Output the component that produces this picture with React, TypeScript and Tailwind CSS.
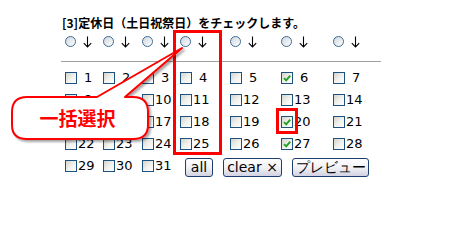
import React from "react";

const checked = [6, 20, 27];
const cols = "grid grid-cols-[38px_39px_38px_50px_51px_52px_52px]";

function Box({ on }: { on?: boolean }) {
  return (
    <span className="relative inline-block w-[12px] h-[12px] shrink-0 border border-[#1c5180] bg-linear-to-br from-[#d4d4cc] via-[#f0f0ec] to-white">
      {on && (
        <svg viewBox="0 0 10 10" className="absolute left-0 top-0 w-[10px] h-[10px]">
          <path d="M2 5.2 L4.2 7.4 L8.2 2.6" fill="none" stroke="#21a121" strokeWidth="1.9" />
        </svg>
      )}
    </span>
  );
}

function Day({ n }: { n: number }) {
  return (
    <div className="flex items-center h-[22px]">
      <Box on={checked.includes(n)} />
      <span className={n < 10 ? "ml-[7px]" : "ml-[1px]"}>{n}</span>
    </div>
  );
}

function Btn({ label, w }: { label: string; w: string }) {
  return (
    <button
      className={`${w} h-[19px] rounded-[3px] border border-[#1c3f6e] bg-linear-to-b from-white via-[#f2f2f6] to-[#d2d2e2] text-[14px] leading-none text-black`}
    >
      {label}
    </button>
  );
}

function Down() {
  return (
    <svg viewBox="0 0 9 12" className="ml-[7px] mt-[2px] w-[9px] h-[12px]">
      <path d="M4.5 0.5 V11 M0.8 7.2 L4.5 11 L8.2 7.2" fill="none" stroke="#000" strokeWidth="1.1" />
    </svg>
  );
}

export default function App() {
  const rows = [
    [1, 2, 3, 4, 5, 6, 7],
    [8, 9, 10, 11, 12, 13, 14],
    [15, 16, 17, 18, 19, 20, 21],
    [22, 23, 24, 25, 26, 27, 28],
  ];

  return (
    <div className="relative w-[458px] h-[200px] bg-white overflow-hidden font-['DejaVu_Sans',sans-serif] text-[13px] text-black">
      <div className="pl-[61px] pt-[16px]">
        <p className="pl-[1px] h-[15px] text-[12px] leading-[14px] font-bold font-['Noto_Sans_CJK_JP',sans-serif]">
          [3]定休日（土日祝祭日）をチェックします。
        </p>
        <div className={`${cols} ml-[4px] mt-[2px] h-[16px]`}>
          {[0, 1, 2, 3, 4, 5, 6].map((i) => (
            <div key={i} className="flex items-center">
              <span className="inline-block w-[11px] h-[11px] rounded-full border border-[#3c6a98] bg-linear-to-br from-[#cfd6de] to-white" />
              <Down />
            </div>
          ))}
        </div>
        <div className="mt-[12px] w-[320px] border-t border-[#a0a0a0]" />
        <div className="ml-[4px] mt-[5px]">
          {rows.map((r, i) => (
            <div key={i} className={cols}>
              {r.map((n) => (
                <Day key={n} n={n} />
              ))}
            </div>
          ))}
          <div className={`${cols} h-[24px]`}>
            <Day n={29} />
            <Day n={30} />
            <Day n={31} />
            <div className="col-span-4 flex items-center gap-[10px] pl-[5px]">
              <Btn label="all" w="w-[28px]" />
              <Btn label="clear ×" w="w-[59px]" />
              <Btn label="プレビュー" w="w-[77px]" />
            </div>
          </div>
        </div>
      </div>

      {/* annotations */}
      <div className="absolute left-[173px] top-[30px] w-[49px] h-[125px] border-[3px] border-[#ff0000]" />
      <div className="absolute left-[276px] top-[108px] w-[22px] h-[26px] border-[3px] border-[#ff0000]" />
      <svg className="absolute left-0 top-0 w-[458px] h-[200px] pointer-events-none" viewBox="0 0 458 200">
        <defs>
          <filter id="sh" x="-10%" y="-10%" width="130%" height="140%">
            <feDropShadow dx="2" dy="2" stdDeviation="1.2" floodColor="#000" floodOpacity="0.35" />
          </filter>
        </defs>
        <path
          d="M97 97 L182 48 L125 97 L133 97 C144 97 148 103 148 112 L148 125 C148 134 144 139 133 139 L27 139 C16 139 12 134 12 125 L12 112 C12 103 16 97 27 97 Z"
          fill="white"
          stroke="#ff0000"
          strokeWidth="2"
          strokeLinejoin="round"
          filter="url(#sh)"
        />
      </svg>
      <div className="absolute left-[12px] top-[97px] w-[136px] h-[42px] flex items-center justify-center pr-[5px] text-[19px] font-bold text-[#ff0000] font-['Noto_Sans_CJK_JP',sans-serif]">
        一括選択
      </div>
    </div>
  );
}
